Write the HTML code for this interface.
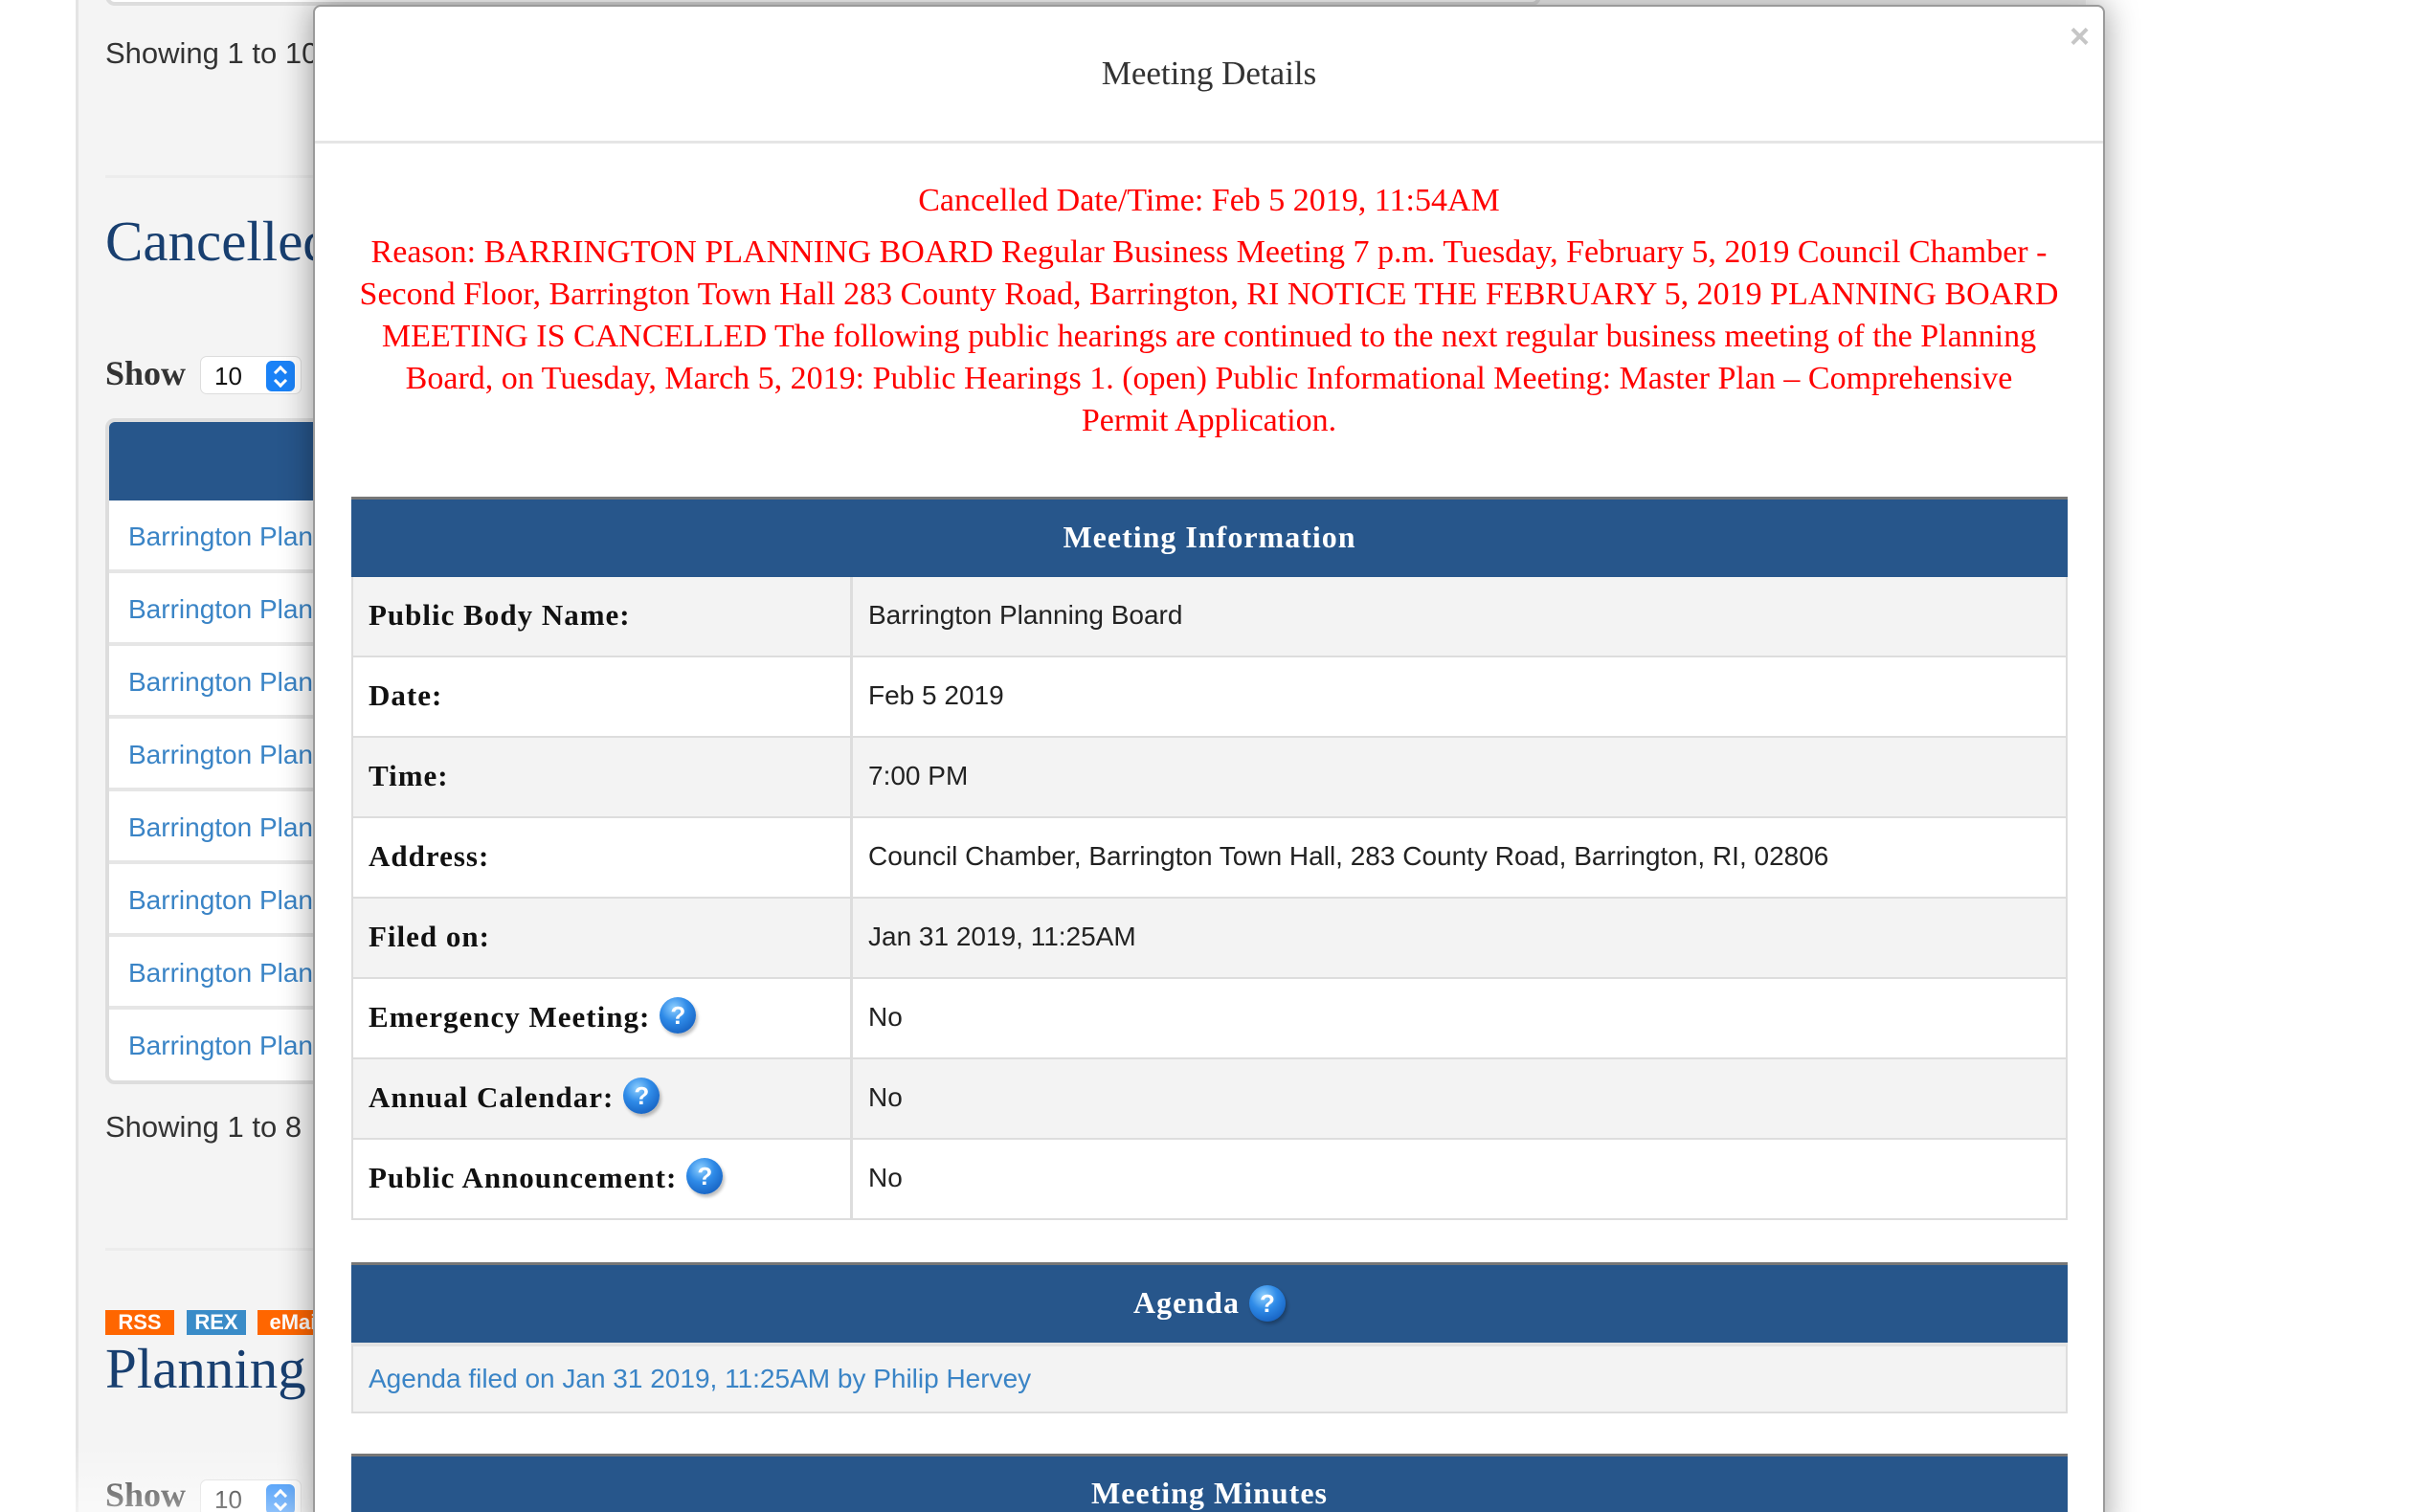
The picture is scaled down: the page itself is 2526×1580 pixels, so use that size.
<!DOCTYPE html>
<html><head><meta charset="utf-8">
<style>
*{margin:0;padding:0;box-sizing:border-box}
html,body{width:2526px;height:1580px;overflow:hidden;background:#fff;position:relative;font-family:"Liberation Sans",Arial,sans-serif}
.abs{position:absolute}
.panel{left:79px;top:0;width:2100px;height:1580px;background:#f4f4f4;border-left:3px solid #e4e4e4}
.showing{left:110px;font-size:31px;color:#333}
.hr{left:110px;width:1500px;height:3px;background:#ececec}
.h2{left:110px;font-size:59px;color:#183f70;font-family:"Liberation Serif",serif}
.show{left:110px;font-size:36px;font-weight:bold;color:#333;font-family:"Liberation Serif",serif}
.sel{left:209px;width:106px;height:40px;background:#fff;border:1px solid #ddd;border-radius:7px;font-size:26px;padding:5px 0 0 14px;color:#111}
.sel i{position:absolute;right:6px;top:4px;width:30px;height:32px;background:#1a82f7;border-radius:6px}
.sel i:before{content:"";position:absolute;left:10px;top:7px;width:7px;height:7px;border-left:3px solid #fff;border-top:3px solid #fff;transform:rotate(45deg)}
.sel i:after{content:"";position:absolute;left:10px;top:16px;width:7px;height:7px;border-right:3px solid #fff;border-bottom:3px solid #fff;transform:rotate(45deg)}
.tbl{left:110px;top:437px;width:1500px;height:696px;border:4px solid #ddd;border-radius:10px;background:#fff;overflow:hidden}
.tbl .hd{height:82px;background:#27568b}
.tbl .r{height:76px;border-bottom:4px solid #e6e6e6;font-size:28px;color:#3a84c6;padding:22px 0 0 20px}
.badge{top:1369px;height:26px;color:#fff;font-weight:bold;font-size:22px;line-height:26px;text-align:center}
.modal{left:327px;top:5px;width:1872px;height:1600px;background:#fff;border:2px solid #9a9a9a;border-radius:8px;box-shadow:0 0 34px rgba(0,0,0,.4)}
.title{left:0;width:100%;top:50px;text-align:center;font-size:35px;color:#333;font-family:"Liberation Serif",serif}
.close{right:14px;top:10px;font-size:36px;color:#c6c6c6;font-weight:bold}
.hline{left:0;top:140px;width:100%;height:3px;background:#e5e5e5}
.red{left:0;width:100%;text-align:center;color:#f00;font-family:"Liberation Serif",serif;font-size:34px;line-height:44px;white-space:nowrap}
.sec{left:38px;width:1793px}
.shd{background:#27568b;border-top:3px solid #777;color:#fff;font-weight:bold;font-family:"Liberation Serif",serif;font-size:32px;letter-spacing:1px;text-align:center}
.row{display:flex;border:2px solid #ddd;border-top:none;height:84px}
.row .l{width:522px;border-right:3px solid #ddd;font-family:"Liberation Serif",serif;font-weight:bold;font-size:31px;letter-spacing:1px;color:#111;padding:22px 0 0 16px;display:flex;align-items:flex-start}
.row .v{flex:1;font-size:28px;color:#222;padding:24px 0 0 16px}
.g{background:#f3f3f3}
.q{display:inline-block;width:38px;height:38px;border-radius:50%;background:radial-gradient(circle at 40% 30%,#8fd0ff 0,#2f8be8 40%,#0b4fb0 100%);color:#fff;font-family:"Liberation Sans",sans-serif;font-size:26px;font-weight:bold;text-align:center;line-height:38px;margin-left:10px;box-shadow:2px 3px 3px rgba(0,0,0,.25);vertical-align:middle;letter-spacing:0}
</style></head><body>
<div class="abs panel"></div>
<div class="abs" style="left:110px;top:-10px;width:1500px;height:16px;border:4px solid #ddd;border-top:none;border-radius:0 0 10px 10px;background:#fff"></div>
<div class="abs showing" style="top:38px">Showing 1 to 10</div>
<div class="abs hr" style="top:183px"></div>
<div class="abs h2" style="top:218px">Cancelled</div>
<div class="abs show" style="top:369px">Show</div>
<div class="abs sel" style="top:372px">10<i></i></div>
<div class="abs tbl"><div class="hd"></div>
<div class="r">Barrington Planning Board</div><div class="r">Barrington Planning Board</div><div class="r">Barrington Planning Board</div><div class="r">Barrington Planning Board</div><div class="r">Barrington Planning Board</div><div class="r">Barrington Planning Board</div><div class="r">Barrington Planning Board</div><div class="r" style="border:none">Barrington Planning Board</div></div>
<div class="abs showing" style="top:1160px">Showing 1 to 8</div>
<div class="abs hr" style="top:1304px"></div>
<div class="abs badge" style="left:110px;width:72px;background:#f60">RSS</div>
<div class="abs badge" style="left:195px;width:62px;background:#3a8cc8">REX</div>
<div class="abs badge" style="left:269px;width:80px;background:#f60">eMail</div>
<div class="abs h2" style="top:1396px">Planning</div>
<div class="abs show" style="top:1541px">Show</div>
<div class="abs sel" style="top:1546px">10<i></i></div>
<div class="abs" style="left:0;top:1510px;width:330px;height:70px;background:linear-gradient(rgba(255,255,255,0),rgba(255,255,255,.5))"></div>

<div class="abs modal">
<div class="abs title">Meeting Details</div>
<div class="abs close">×</div>
<div class="abs hline"></div>
<div class="abs red" style="top:181px">Cancelled Date/Time: Feb 5 2019, 11:54AM</div>
<div class="abs red" style="top:235px">Reason: BARRINGTON PLANNING BOARD Regular Business Meeting 7 p.m. Tuesday, February 5, 2019 Council Chamber -<br>Second Floor, Barrington Town Hall 283 County Road, Barrington, RI NOTICE THE FEBRUARY 5, 2019 PLANNING BOARD<br>MEETING IS CANCELLED The following public hearings are continued to the next regular business meeting of the Planning<br>Board, on Tuesday, March 5, 2019: Public Hearings 1. (open) Public Informational Meeting: Master Plan – Comprehensive<br>Permit Application.</div>
<div class="abs sec" style="top:512px">
<div class="shd" style="height:84px;line-height:78px">Meeting Information</div>
<div class="row g"><div class="l">Public Body Name:</div><div class="v">Barrington Planning Board</div></div>
<div class="row"><div class="l">Date:</div><div class="v">Feb 5 2019</div></div>
<div class="row g"><div class="l">Time:</div><div class="v">7:00 PM</div></div>
<div class="row"><div class="l">Address:</div><div class="v">Council Chamber, Barrington Town Hall, 283 County Road, Barrington, RI, 02806</div></div>
<div class="row g"><div class="l">Filed on:</div><div class="v">Jan 31 2019, 11:25AM</div></div>
<div class="row"><div class="l">Emergency Meeting:<span class="q" style="margin-top:-3px">?</span></div><div class="v">No</div></div>
<div class="row g"><div class="l">Annual Calendar:<span class="q" style="margin-top:-3px">?</span></div><div class="v">No</div></div>
<div class="row"><div class="l">Public Announcement:<span class="q" style="margin-top:-3px">?</span></div><div class="v">No</div></div>
</div>
<div class="abs sec" style="top:1312px">
<div class="shd" style="height:84px;line-height:78px">Agenda<span class="q" style="margin-top:-6px">?</span></div>
<div class="g" style="height:74px;border:2px solid #ddd;border-top:4px solid #e3e3e3;font-size:28px;color:#3a84c6;padding:18px 0 0 16px">Agenda filed on Jan 31 2019, 11:25AM by Philip Hervey</div>
</div>
<div class="abs sec" style="top:1512px">
<div class="shd" style="height:100px;padding-top:20px">Meeting Minutes</div>
</div>
</div>
</body></html>
